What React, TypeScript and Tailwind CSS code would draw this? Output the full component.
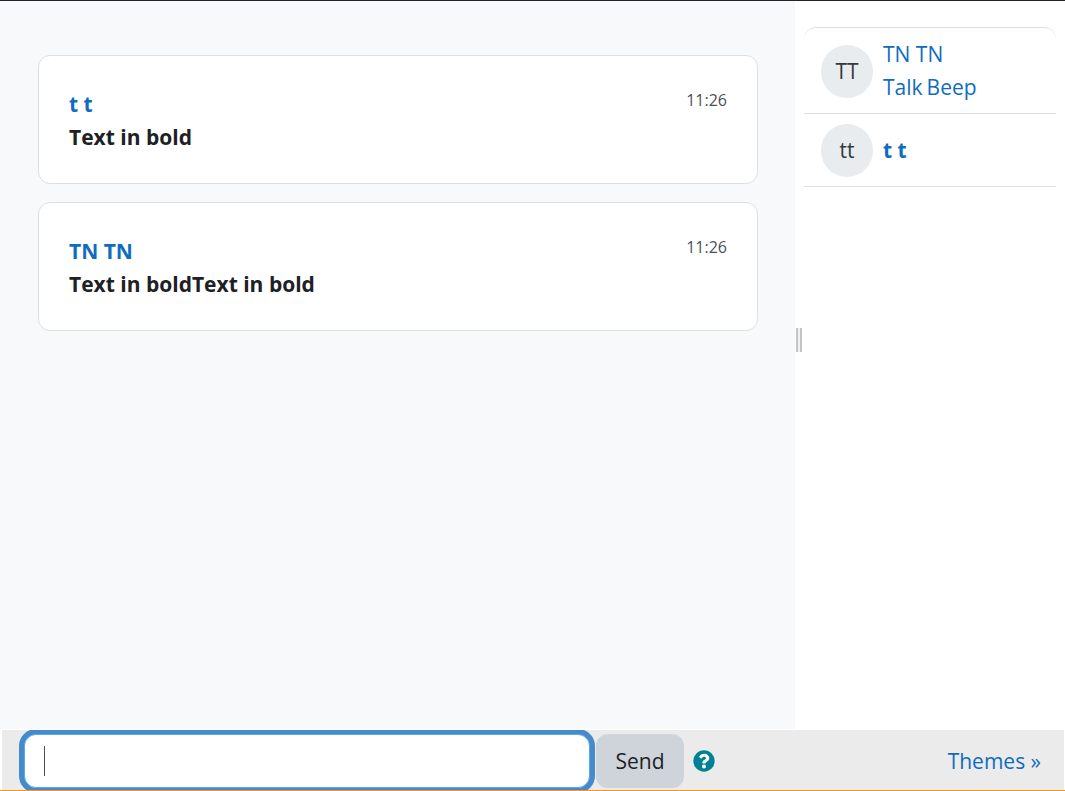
import { useState } from "react";
import type { ReactNode } from "react";

type Message = { id: number; author: string; text: string; time: string };

const messages: Message[] = [
  { id: 1, author: "t t", text: "Text in bold", time: "11:26" },
  { id: 2, author: "TN TN", text: "Text in boldText in bold", time: "11:26" },
];

function MessageCard({ message }: { message: Message }) {
  return (
    <article className="flex items-start justify-between rounded-xl border border-[#dee0e0] bg-white px-[30px] pt-8 pb-[29px]">
      <div className="font-bold">
        <a href="#profile" className="block text-[#0f6cbf]">
          {message.author}
        </a>
        <p>{message.text}</p>
      </div>
      <time className="text-base leading-6 text-[#495057]">{message.time}</time>
    </article>
  );
}

function UserRow({ initials, children }: { initials: string; children: ReactNode }) {
  return (
    <li className="flex items-center gap-2.5 border-b border-[#dee0e0] px-[17px] pt-2.5 pb-[9px]">
      <span className="flex h-[53px] w-[52px] shrink-0 items-center justify-center rounded-full bg-[#e9ecef] text-[#343a40]">
        {initials}
      </span>
      <div className="text-[#0f6cbf]">{children}</div>
    </li>
  );
}

function HelpIcon() {
  return (
    <svg viewBox="0 0 512 512" className="h-[22px] w-[22px]" aria-hidden="true">
      <circle cx="256" cy="256" r="248" fill="#008196" />
      <path
        fill="#fff"
        d="M262.7 90c-54.500 0-89.300 23-116.500 63.800-3.500 5.300-2.400 12.400 2.700 16.300l34.700 26.300c5.200 3.900 12.600 3 16.700-2.100 17.900-22.700 30.100-35.800 57.300-35.800 20.400 0 45.700 13.100 45.700 33 0 15-12.400 22.700-32.500 34C247.100 238.500 216 254.900 216 296v4c0 6.600 5.400 12 12 12h56c6.600 0 12-5.400 12-12v-1.300c0-28.500 83.200-29.600 83.200-106.700 0-58-60.200-102-116.500-102zM256 338c-25.400 0-46 20.600-46 46s20.600 46 46 46 46-20.600 46-46-20.600-46-46-46z"
      />
    </svg>
  );
}

export default function App() {
  const [draft, setDraft] = useState("");

  return (
    <div className="flex h-screen flex-col overflow-hidden border-t border-b border-t-[#212529] border-b-[#f7931e] bg-white font-['Open_Sans','Noto_Sans',sans-serif] text-[21px] leading-[33px] text-[#1d2125]">
      <div className="flex min-h-0 flex-1">
        <main className="flex min-w-0 flex-1 flex-col gap-[18px] overflow-hidden bg-[#f8f9fb] pt-[54px] pr-[37px] pl-[38px]">
          {messages.map((message) => (
            <MessageCard key={message.id} message={message} />
          ))}
        </main>
        <aside className="flex w-[270px] shrink-0">
          <div className="flex w-[9px] flex-col items-start pt-[327px] pl-px">
            <div className="h-6 w-1.5 border-x-2 border-[#c4c4c4] bg-[#f1f1f1]" />
          </div>
          <ul className="mt-[26px] mr-[9px] flex-1 self-start rounded-t-xl border-t border-[#dee0e0]">
            <UserRow initials="TT">
              <a href="#profile" className="block">
                TN TN
              </a>
              <div className="flex gap-1">
                <a href="#talk">Talk</a>
                <a href="#beep">Beep</a>
              </div>
            </UserRow>
            <UserRow initials="tt">
              <a href="#profile" className="font-bold">
                t t
              </a>
            </UserRow>
          </ul>
        </aside>
      </div>
      <form
        className="mt-px mr-px ml-0.5 flex h-[60px] shrink-0 items-center overflow-hidden bg-[#ebebeb] pt-0.5 pr-[23px] pl-[22px]"
        onSubmit={(event) => event.preventDefault()}
      >
        <div className="relative flex w-[566px] min-w-0">
          <input
            type="text"
            aria-label="Message"
            autoFocus
            value={draft}
            onChange={(event) => setDraft(event.target.value)}
            className={`h-[54px] w-full rounded-xl border border-[#5ba7ee] bg-white px-[19px] text-[#495057] ring-5 ring-[#458bcb] outline-none ${
              draft ? "caret-[#495057]" : "caret-transparent"
            }`}
          />
          {draft === "" && (
            <span
              aria-hidden="true"
              className="pointer-events-none absolute inset-y-3 left-5 w-px bg-[#495057]"
            />
          )}
        </div>
        <button
          type="submit"
          className="ml-1.5 h-[54px] w-[88px] shrink-0 rounded-xl bg-[#ced4da]"
        >
          Send
        </button>
        <button type="button" aria-label="Help with chat" className="ml-[9px] shrink-0">
          <HelpIcon />
        </button>
        <a href="#themes" className="ml-auto shrink-0 text-[#0f6cbf]">
          Themes »
        </a>
      </form>
    </div>
  );
}
